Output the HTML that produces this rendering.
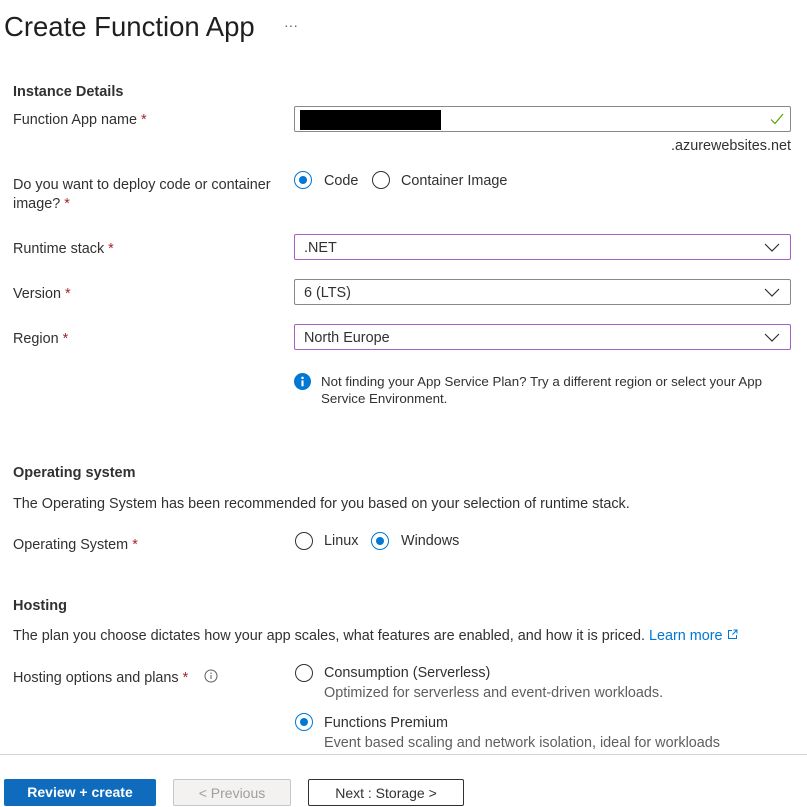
<!DOCTYPE html>
<html><head><meta charset="utf-8"><style>
*{margin:0;padding:0;box-sizing:border-box}
body{width:807px;height:807px;background:#fff;font-family:"Liberation Sans",sans-serif;font-size:14.4px;color:#323130;position:relative;overflow:hidden}
.a{position:absolute;white-space:nowrap;line-height:18px}
.req{color:#a4262c}
.h{font-weight:bold;font-size:14.5px;color:#323130}
.box{position:absolute;left:294px;width:497px;height:26px;border:1px solid #8a8886;border-radius:2px;background:#fff}
.box.p{border-color:#a860c4}
.box span{position:absolute;left:9px;top:4px;line-height:18px}
.chev{position:absolute;right:10px;top:8px}
.r{position:absolute;width:18px;height:18px;border:1.3px solid #323130;border-radius:50%;background:#fff}
.r.on{border-color:#0078d4}
.r.on::after{content:"";position:absolute;left:3.5px;top:3.5px;width:8px;height:8px;border-radius:50%;background:#0078d4}
.sub{color:#605e5c}
.btn{position:absolute;top:779px;height:27px;font-size:14px;text-align:center;line-height:26px;border-radius:2px}
</style></head><body>
<div class="a" style="left:4px;top:10px;font-size:27.5px;line-height:34px;color:#201f1e">Create Function App</div>
<div class="a" style="left:284px;top:16px;font-size:14px;color:#605e5c">···</div>

<div class="a h" style="left:13px;top:83px">Instance Details</div>
<div class="a" style="left:13px;top:111px">Function App name <span class="req">*</span></div>
<div class="box" style="top:106px"><div style="position:absolute;left:5px;top:3px;width:141px;height:20px;background:#000"></div>
<svg style="position:absolute;right:6px;top:6px" width="14" height="12" viewBox="0 0 14 12"><path d="M1 6.5 L5 10.5 L13 1" fill="none" stroke="#57a300" stroke-width="1.2"/></svg></div>
<div class="a" style="right:16px;top:137px">.azurewebsites.net</div>

<div class="a" style="left:13px;top:176px;line-height:19px">Do you want to deploy code or container<br>image? <span class="req">*</span></div>
<div class="r on" style="left:294px;top:171px"></div><div class="a" style="left:324px;top:172px">Code</div>
<div class="r" style="left:372px;top:171px"></div><div class="a" style="left:401px;top:172px">Container Image</div>

<div class="a" style="left:13px;top:240px">Runtime stack <span class="req">*</span></div>
<div class="box p" style="top:234px"><span>.NET</span><svg class="chev" width="16" height="9" viewBox="0 0 16 9"><path d="M1 1 L8 8 L15 1" fill="none" stroke="#323130" stroke-width="1.2"/></svg></div>
<div class="a" style="left:13px;top:285px">Version <span class="req">*</span></div>
<div class="box" style="top:279px"><span>6 (LTS)</span><svg class="chev" width="16" height="9" viewBox="0 0 16 9"><path d="M1 1 L8 8 L15 1" fill="none" stroke="#323130" stroke-width="1.2"/></svg></div>
<div class="a" style="left:13px;top:330px">Region <span class="req">*</span></div>
<div class="box p" style="top:324px"><span>North Europe</span><svg class="chev" width="16" height="9" viewBox="0 0 16 9"><path d="M1 1 L8 8 L15 1" fill="none" stroke="#323130" stroke-width="1.2"/></svg></div>

<svg style="position:absolute;left:294px;top:373px" width="17" height="17" viewBox="0 0 16 16"><circle cx="8" cy="8" r="8" fill="#0078d4"/><rect x="7" y="7" width="2" height="5.5" fill="#fff"/><circle cx="8" cy="4.6" r="1.2" fill="#fff"/></svg>
<div class="a" style="left:321px;top:373px;font-size:13.3px;line-height:17px">Not finding your App Service Plan? Try a different region or select your App<br>Service Environment.</div>

<div class="a h" style="left:13px;top:464px">Operating system</div>
<div class="a" style="left:13px;top:495px">The Operating System has been recommended for you based on your selection of runtime stack.</div>
<div class="a" style="left:13px;top:536px">Operating System <span class="req">*</span></div>
<div class="r" style="left:295px;top:532px"></div><div class="a" style="left:324px;top:532px">Linux</div>
<div class="r on" style="left:371px;top:532px"></div><div class="a" style="left:401px;top:532px">Windows</div>

<div class="a h" style="left:13px;top:597px">Hosting</div>
<div class="a" style="left:13px;top:627px">The plan you choose dictates how your app scales, what features are enabled, and how it is priced. <span style="color:#0078d4">Learn more</span> <svg width="11" height="11" viewBox="0 0 11 11"><path d="M5 1.5H1.5V9.5H9.5V6 M6.5 1H10V4.5 M10 1L5.5 5.5" fill="none" stroke="#0078d4" stroke-width="1"/></svg></div>
<div class="a" style="left:13px;top:669px">Hosting options and plans <span class="req">*</span></div>
<svg style="position:absolute;left:204px;top:669px" width="14" height="14" viewBox="0 0 14 14"><circle cx="7" cy="7" r="6" fill="none" stroke="#605e5c"/><rect x="6.5" y="6" width="1" height="4" fill="#605e5c"/><circle cx="7" cy="4.2" r=".7" fill="#605e5c"/></svg>
<div class="r" style="left:295px;top:664px"></div>
<div class="a" style="left:324px;top:664px">Consumption (Serverless)</div>
<div class="a sub" style="left:324px;top:684px">Optimized for serverless and event-driven workloads.</div>
<div class="r on" style="left:295px;top:713px"></div>
<div class="a" style="left:324px;top:714px">Functions Premium</div>
<div class="a sub" style="left:324px;top:734px">Event based scaling and network isolation, ideal for workloads</div>

<div style="position:absolute;left:0;top:754px;width:807px;height:1px;background:#d4d4d4"></div>
<div style="position:absolute;left:0;top:755px;width:807px;height:52px;background:#fff"></div>
<div class="btn" style="left:4px;width:152px;background:#0f6cbd;color:#fff;font-weight:bold">Review + create</div>
<div class="btn" style="left:173px;width:118px;border:1px solid #c8c6c4;background:#f3f2f1;color:#a19f9d">&lt; Previous</div>
<div class="btn" style="left:308px;width:156px;border:1px solid #323130;color:#323130">Next : Storage &gt;</div>
</body></html>
